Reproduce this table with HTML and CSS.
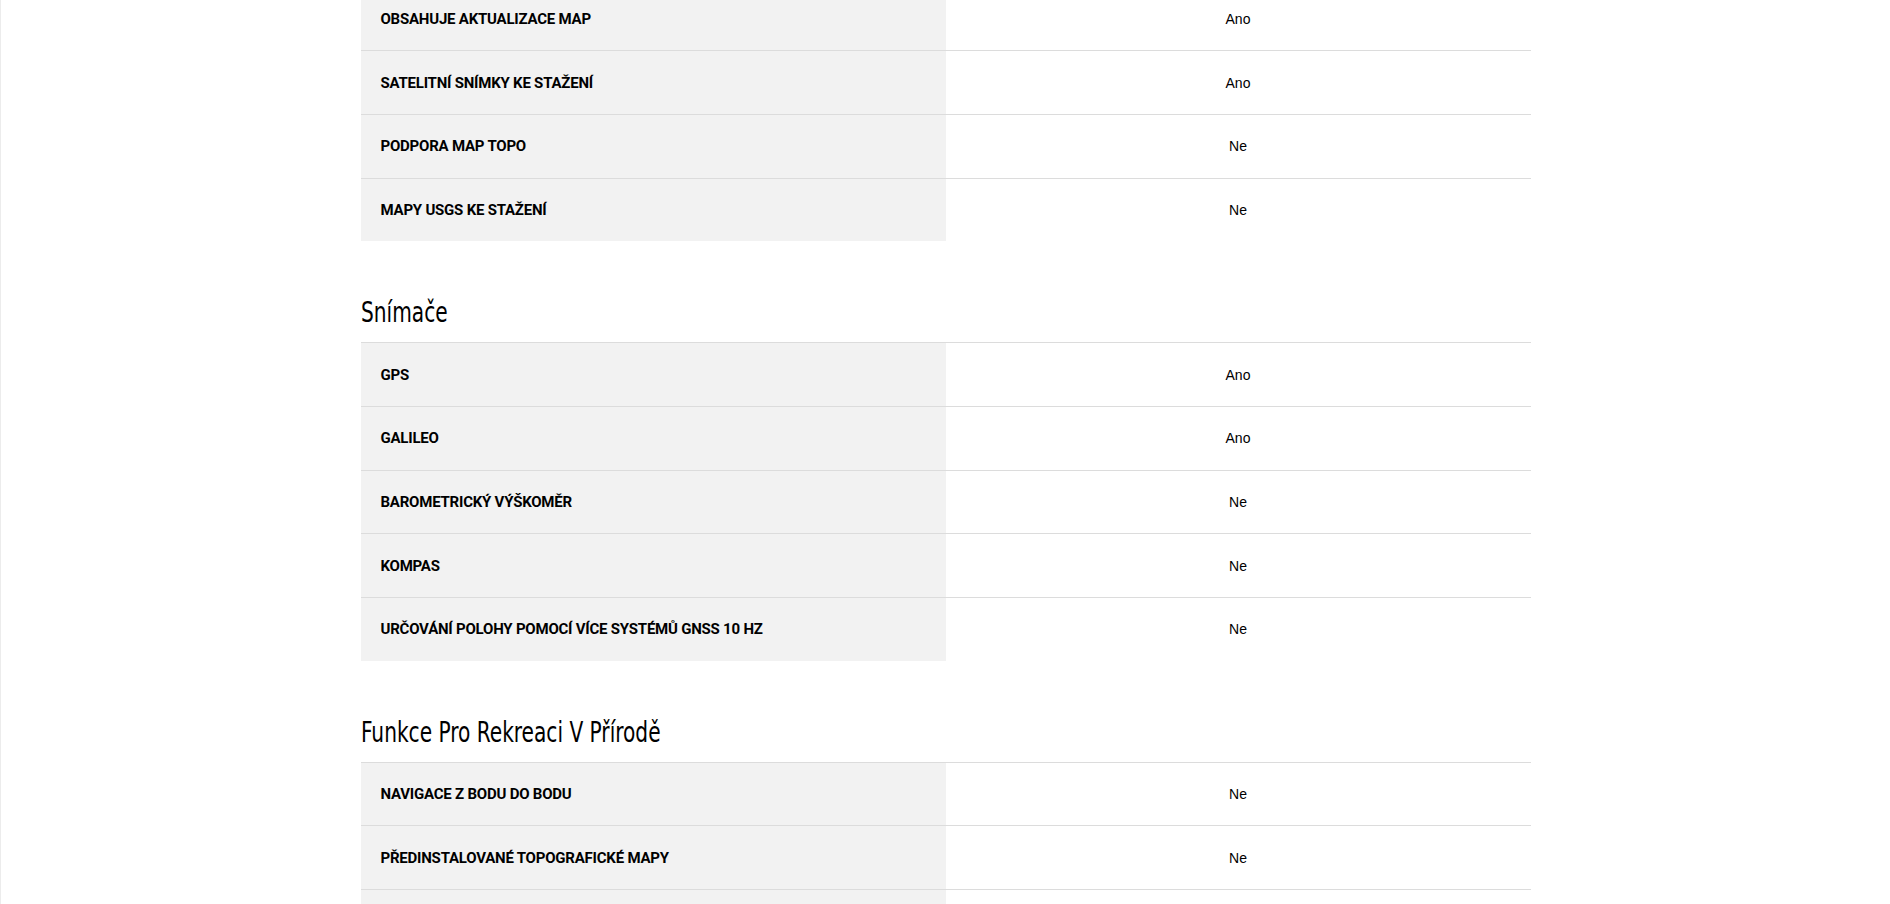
FILE: index.html
```html
<!DOCTYPE html>
<html lang="cs">
<head>
<meta charset="utf-8">
<title>Specifikace</title>
<link rel="stylesheet" href="styles.css">
</head>
<body>
<div class="page">
  <main class="specs">
    <section class="spec-section spec-section--first">
      <div class="spec-table">
        <div class="spec-row spec-row--first"><div class="spec-label">Obsahuje aktualizace map</div><div class="spec-value">Ano</div></div>
        <div class="spec-row"><div class="spec-label">Satelitní snímky ke stažení</div><div class="spec-value">Ano</div></div>
        <div class="spec-row"><div class="spec-label">Podpora map TOPO</div><div class="spec-value">Ne</div></div>
        <div class="spec-row"><div class="spec-label">Mapy USGS ke stažení</div><div class="spec-value">Ne</div></div>
      </div>
    </section>

    <section class="spec-section">
      <h2 class="spec-title"><span class="spec-title-text">Snímače</span></h2>
      <div class="spec-table">
        <div class="spec-row"><div class="spec-label">GPS</div><div class="spec-value">Ano</div></div>
        <div class="spec-row"><div class="spec-label">Galileo</div><div class="spec-value">Ano</div></div>
        <div class="spec-row"><div class="spec-label">Barometrický výškoměr</div><div class="spec-value">Ne</div></div>
        <div class="spec-row"><div class="spec-label">Kompas</div><div class="spec-value">Ne</div></div>
        <div class="spec-row"><div class="spec-label">Určování polohy pomocí více systémů GNSS 10 Hz</div><div class="spec-value">Ne</div></div>
      </div>
    </section>

    <section class="spec-section">
      <h2 class="spec-title"><span class="spec-title-text">Funkce Pro Rekreaci V Přírodě</span></h2>
      <div class="spec-table">
        <div class="spec-row"><div class="spec-label">Navigace z bodu do bodu</div><div class="spec-value">Ne</div></div>
        <div class="spec-row"><div class="spec-label">Předinstalované topografické mapy</div><div class="spec-value">Ne</div></div>
        <div class="spec-row spec-row--clipped"></div>
      </div>
    </section>
  </main>
</div>
</body>
</html>
```

FILE: styles.css
```css
* { box-sizing: border-box; }

html, body {
  margin: 0;
  padding: 0;
  background: #ffffff;
  overflow: hidden;
}

.page {
  border-left: 1px solid #ececec;
  min-height: 100vh;
}

.specs {
  width: 1170px;
  margin: -12.5px auto 0;
}

.spec-section {
  margin-top: 55px;
}

.spec-section--first {
  margin-top: 0;
}

.spec-title {
  margin: 0 0 12px;
  font-family: "DejaVu Sans Condensed", "DejaVu Sans", sans-serif;
  font-stretch: condensed;
  font-weight: 400;
  font-size: 28px;
  line-height: 34px;
  color: #000;
  white-space: nowrap;
}

.spec-title-text {
  display: inline-block;
  transform: scaleX(0.8);
  transform-origin: left center;
}

.spec-table {
  display: flex;
  flex-direction: column;
}

.spec-row {
  display: grid;
  grid-template-columns: 1fr 1fr;
  border-top: 1px solid #dcdcdc;
}

.spec-row--first {
  border-top: 0;
}

.spec-row--clipped {
  min-height: 62.7px;
  background: linear-gradient(to right, #f2f2f2 50%, #ffffff 50%);
}

.spec-label,
.spec-value {
  min-height: 62.7px;
  display: flex;
  align-items: center;
}

.spec-label {
  background: #f2f2f2;
  padding: 0 20px;
  font-family: Roboto, "Liberation Sans", sans-serif;
  font-weight: 700;
  font-size: 15px;
  text-transform: uppercase;
  color: #000;
  letter-spacing: -0.22px;
}

.spec-value {
  justify-content: center;
  font-family: "Liberation Sans", Arial, sans-serif;
  font-size: 14px;
  color: #000;
}
```
